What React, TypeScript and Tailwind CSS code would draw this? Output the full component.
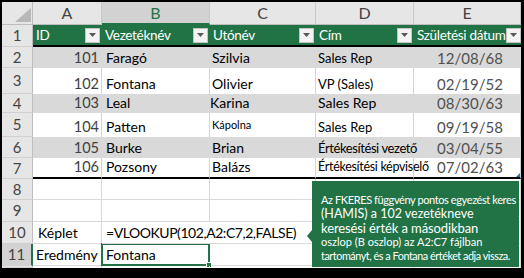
import React from "react";

const rowsData = [
  { h: "h-[21px]", band: true, id: "101", last: "Faragó", first: "Szilvia", firstCls: "", title: "Sales Rep", titleCls: "text-[13px]", date: "12/08/68" },
  { h: "h-[26px]", band: false, id: "102", last: "Fontana", first: "Olivier", firstCls: "", title: "VP (Sales)", titleCls: "text-[13px]", date: "02/19/52" },
  { h: "h-[19px]", band: true, id: "103", last: "Leal", first: "Karina", firstCls: "-ml-[2px]", title: "Sales Rep", titleCls: "text-[14px]", date: "08/30/63" },
  { h: "h-[24px]", band: false, id: "104", last: "Patten", first: "Kápolna", firstCls: "text-[11px] pb-[2px]", title: "Sales Rep", titleCls: "text-[13px]", date: "09/19/58" },
  { h: "h-[21px]", band: true, id: "105", last: "Burke", first: "Brian", firstCls: "", title: "Értékesítési vezető", titleCls: "text-[13px] tracking-[-0.4px]", date: "03/04/55" },
  { h: "h-[21px]", band: false, id: "106", last: "Pozsony", first: "Balázs", firstCls: "", title: "Értékesítési képviselő", titleCls: "text-[12.5px] tracking-[-0.3px]", date: "07/02/63", last7: true },
];

function Dropdown() {
  return (
    <div className="w-[15px] h-[15px] shrink-0 bg-[#f3f3f3] border border-[#c4c4c4] flex items-center justify-center">
      <svg width="7" height="4" viewBox="0 0 7 4">
        <path d="M0 0h7L3.5 4z" fill="#595959" />
      </svg>
    </div>
  );
}

function RowHead({ n, h, sel }: { n: string; h: string; sel?: boolean }) {
  return (
    <div
      className={`w-[31px] ${h} shrink-0 flex items-center justify-center text-[15px] leading-none text-[#444] border-b border-[#d0d0d0] ${
        sel ? "bg-[#d2d2d2] border-r-2 border-r-[#217346]" : "bg-[#e6e6e6] border-r border-r-[#bdbdbd]"
      }`}
    >
      {n}
    </div>
  );
}

export default function App() {
  return (
    <div className="w-[524px] h-[278px] bg-black pt-[2px] pl-[2px] overflow-hidden font-['Lato',sans-serif]">
      <div className="relative w-[519px] h-[266px] bg-white flex flex-col overflow-hidden">
        {/* column headers */}
        <div className="flex h-[23px] shrink-0">
          <div className="w-[31px] h-full bg-[#e6e6e6] border-r border-b border-[#bdbdbd] flex items-end justify-end pr-[1px] pb-[2px]">
            <svg width="16" height="14" viewBox="0 0 16 14">
              <path d="M16 0V14H0z" fill="#b8b8b8" />
            </svg>
          </div>
          {[
            ["A", "w-[69px]"],
            ["B", "w-[108px]"],
            ["C", "w-[106px]"],
            ["D", "w-[98px]"],
            ["E", "w-[107px]"],
          ].map(([l, w]) => (
            <div
              key={l}
              className={`${w} h-full flex items-center justify-center text-[16px] leading-none border-r border-[#c8c8c8] ${
                l === "B"
                  ? "bg-[#d2d2d2] text-[#217346] border-b-2 border-b-[#217346]"
                  : "bg-[#e6e6e6] text-[#444] border-b border-b-[#bdbdbd]"
              }`}
            >
              {l}
            </div>
          ))}
        </div>

        {/* row 1: table header */}
        <div className="flex h-[22px] shrink-0">
          <RowHead n="1" h="h-full" />
          {[
            ["ID", "w-[69px]"],
            ["Vezetéknév", "w-[108px]"],
            ["Utónév", "w-[106px]"],
            ["Cím", "w-[98px]"],
            ["Születési dátum", "w-[107px]"],
          ].map(([t, w]) => (
            <div
              key={t}
              className={`${w} h-full bg-[#217346] border-b-2 border-black flex items-center justify-between pl-[3px] pr-[2px] text-white text-[13.5px] leading-[16px]`}
            >
              <span className="whitespace-nowrap tracking-[-0.3px]">{t}</span>
              <Dropdown />
            </div>
          ))}
        </div>

        {/* data rows */}
        {rowsData.map((r, i) => {
          const bg = r.band ? "bg-[#d9d9d9]" : "bg-white";
          const br = r.band ? "border-r border-r-[#d9d9d9]" : "border-r border-r-[#d4d4d4]";
          const bb = r.last7 ? "border-b-2 border-b-black" : "";
          const cell = `h-full ${bg} ${br} ${bb} flex items-end pb-[2px] leading-[16px] whitespace-nowrap`;
          return (
            <div key={r.id} className={`flex ${r.h} shrink-0`}>
              <RowHead n={String(i + 2)} h="h-full" />
              <div className={`w-[69px] ${cell} justify-end pr-[2px] text-[14.5px] text-[#404040]`}>{r.id}</div>
              <div className={`w-[108px] ${cell} pl-[4px] text-[14px] text-black`}>{r.last}</div>
              <div className={`w-[106px] ${cell} pl-[2px] text-[14px] text-black`}>
                <span className={r.firstCls}>{r.first}</span>
              </div>
              <div className={`w-[98px] ${cell} pl-[2px] text-black relative z-10`}>
                <span className={r.titleCls}>{r.title}</span>
              </div>
              <div className={`w-[107px] ${cell} justify-center pl-[6px] text-[15px] text-[#505050] relative`}>
                {r.date}
                {r.last7 && (
                  <svg className="absolute right-0 bottom-0" width="4" height="4" viewBox="0 0 4 4">
                    <path d="M4 0V4H0z" fill="#3b6fb6" />
                  </svg>
                )}
              </div>
            </div>
          );
        })}

        {/* rows 8-12 */}
        {[
          { n: "8", h: "h-[21px]" },
          { n: "9", h: "h-[22px]" },
          { n: "10", h: "h-[22px]", a: "Képlet", b: "=VLOOKUP(102,A2:C7,2,FALSE)" },
          { n: "11", h: "h-[22px]", a: "Eredmény", b: "Fontana", sel: true },
          { n: "12", h: "h-[2px]" },
        ].map((r) => {
          const cell = "h-full border-r border-b border-[#d9d9d9] flex items-end pb-[2px] leading-[16px] whitespace-nowrap text-[14px] text-black";
          const spill = r.n === "10";
          return (
            <div key={r.n} className={`flex ${r.h} shrink-0`}>
              <RowHead n={r.n === "12" ? "" : r.n} h="h-full" sel={r.sel} />
              <div className={`w-[69px] ${cell} ${r.sel ? "pl-[3px]" : "pl-[5px]"}`}>{r.a}</div>
              <div className={`w-[108px] ${cell} pl-[4px] relative ${spill ? "border-r-0 z-10 text-[13.5px] tracking-[-0.45px]" : ""}`}>
                {r.b}
                {r.sel && (
                  <div className="absolute -left-[1px] -top-[1px] w-[109px] h-[23px] border-2 border-[#217346]">
                    <div className="absolute -right-[4px] -bottom-[4px] w-[6px] h-[6px] bg-[#217346] border border-white" />
                  </div>
                )}
              </div>
              <div className={`w-[106px] ${cell}`} />
              <div className={`w-[98px] ${cell}`} />
              <div className={`w-[107px] ${cell}`} />
            </div>
          );
        })}

        {/* tooltip */}
        <div className="absolute left-[310px] top-[179px] w-[207px] h-[86px] bg-[#217346] text-white pl-[9px] pt-[12px] z-20">
          <svg className="absolute -left-[5px] top-[49px]" width="5" height="12" viewBox="0 0 5 12">
            <path d="M5 0V12L0 6z" fill="#217346" />
          </svg>
          <div className="leading-[14px] whitespace-nowrap">
            <div className="text-[11px] tracking-[-0.4px]">Az FKERES függvény pontos egyezést keres</div>
            <div className="text-[12.5px] tracking-[0px]">(HAMIS) a 102 vezetékneve</div>
            <div className="text-[13px] tracking-[-0.1px]">keresési érték a másodikban</div>
            <div className="text-[11px] tracking-[0px]">oszlop (B oszlop) az A2:C7 fájlban</div>
            <div className="text-[10.8px] tracking-[-0.45px]">tartományt, és a Fontana értéket adja vissza.</div>
          </div>
        </div>
      </div>
    </div>
  );
}
